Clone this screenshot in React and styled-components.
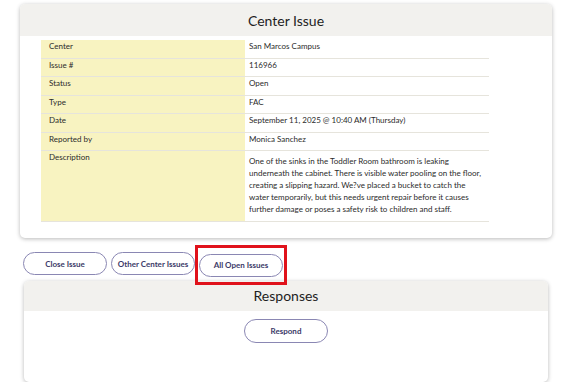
import styled, { createGlobalStyle } from "styled-components";

const GlobalStyle = createGlobalStyle`
  body {
    margin: 0;
    background: #ffffff;
    font-family: "Lato", "Open Sans", sans-serif;
    color: #222;
  }
`;

const Page = styled.div`
  width: 574px;
  padding: 4px 0 0 20px;
  box-sizing: border-box;
`;

const Card = styled.div`
  width: ${(p) => p.$width}px;
  margin-left: ${(p) => p.$offset || 0}px;
  background: #fff;
  border-radius: 5px;
  box-shadow: 0 1px 4px rgba(0, 0, 0, 0.28);
  overflow: hidden;
`;

const CardHeader = styled.div`
  height: ${(p) => p.$height}px;
  background: #f2f1ee;
  display: flex;
  align-items: center;
  justify-content: center;
  font-size: 14px;
  color: #1e1e1e;
`;

const Table = styled.table`
  width: 448px;
  margin: 4px 0 16px 21px;
  border-collapse: collapse;
  font-size: 8px;
  color: #2b2b2b;
`;

const Row = styled.tr`
  border-bottom: 1px solid #e6e4dc;
`;

const Label = styled.td`
  width: 196px;
  background: #f8f3c1;
  padding: 2px 0 6px 8px;
  line-height: 9.5px;
  vertical-align: top;
`;

const Value = styled.td`
  padding: ${(p) => (p.$long ? "4px 4px 6px" : "2px 4px 6px")};
  line-height: ${(p) => (p.$long ? "12px" : "9.5px")};
  vertical-align: top;
`;

const Actions = styled.div`
  display: flex;
  gap: 4px;
  margin: 14px 0 4px 3px;
`;

const PillButton = styled.button`
  width: 84px;
  height: ${(p) => p.$height || 23}px;
  border: 1px solid #8a87b3;
  border-radius: 12px;
  background: #fff;
  color: #3c3a68;
  font-family: "Lato", sans-serif;
  font-weight: 700;
  font-size: 8px;
  padding: 0;
  cursor: pointer;
`;

const Highlight = styled.div`
  position: relative;
  &::after {
    content: "";
    position: absolute;
    left: -4px;
    right: -4px;
    top: -7px;
    bottom: -8px;
    border: 3px solid #e0121b;
    pointer-events: none;
  }
`;

const ResponsesBody = styled.div`
  height: 71px;
  display: flex;
  justify-content: center;
  padding-top: 8px;
  box-sizing: border-box;
`;

const rows = [
  ["Center", "San Marcos Campus"],
  ["Issue #", "116966"],
  ["Status", "Open"],
  ["Type", "FAC"],
  ["Date", "September 11, 2025 @ 10:40 AM (Thursday)"],
  ["Reported by", "Monica Sanchez"],
];

export default function App() {
  return (
    <>
      <GlobalStyle />
      <Page>
        <Card $width={532}>
          <CardHeader $height={32}>Center Issue</CardHeader>
          <Table>
            <tbody>
              {rows.map(([k, v]) => (
                <Row key={k}>
                  <Label>{k}</Label>
                  <Value>{v}</Value>
                </Row>
              ))}
              <Row>
                <Label>Description</Label>
                <Value $long>
                  One of the sinks in the Toddler Room bathroom is leaking
                  underneath the cabinet. There is visible water pooling on the
                  floor, creating a slipping hazard. We?ve placed a bucket to
                  catch the water temporarily, but this needs urgent repair
                  before it causes further damage or poses a safety risk to
                  children and staff.
                </Value>
              </Row>
            </tbody>
          </Table>
        </Card>
        <Actions>
          <PillButton>Close Issue</PillButton>
          <PillButton>Other Center Issues</PillButton>
          <Highlight>
            <PillButton>All Open Issues</PillButton>
          </Highlight>
        </Actions>
        <Card $width={524} $offset={4}>
          <CardHeader $height={30}>Responses</CardHeader>
          <ResponsesBody>
            <PillButton $height={24}>Respond</PillButton>
          </ResponsesBody>
        </Card>
      </Page>
    </>
  );
}
